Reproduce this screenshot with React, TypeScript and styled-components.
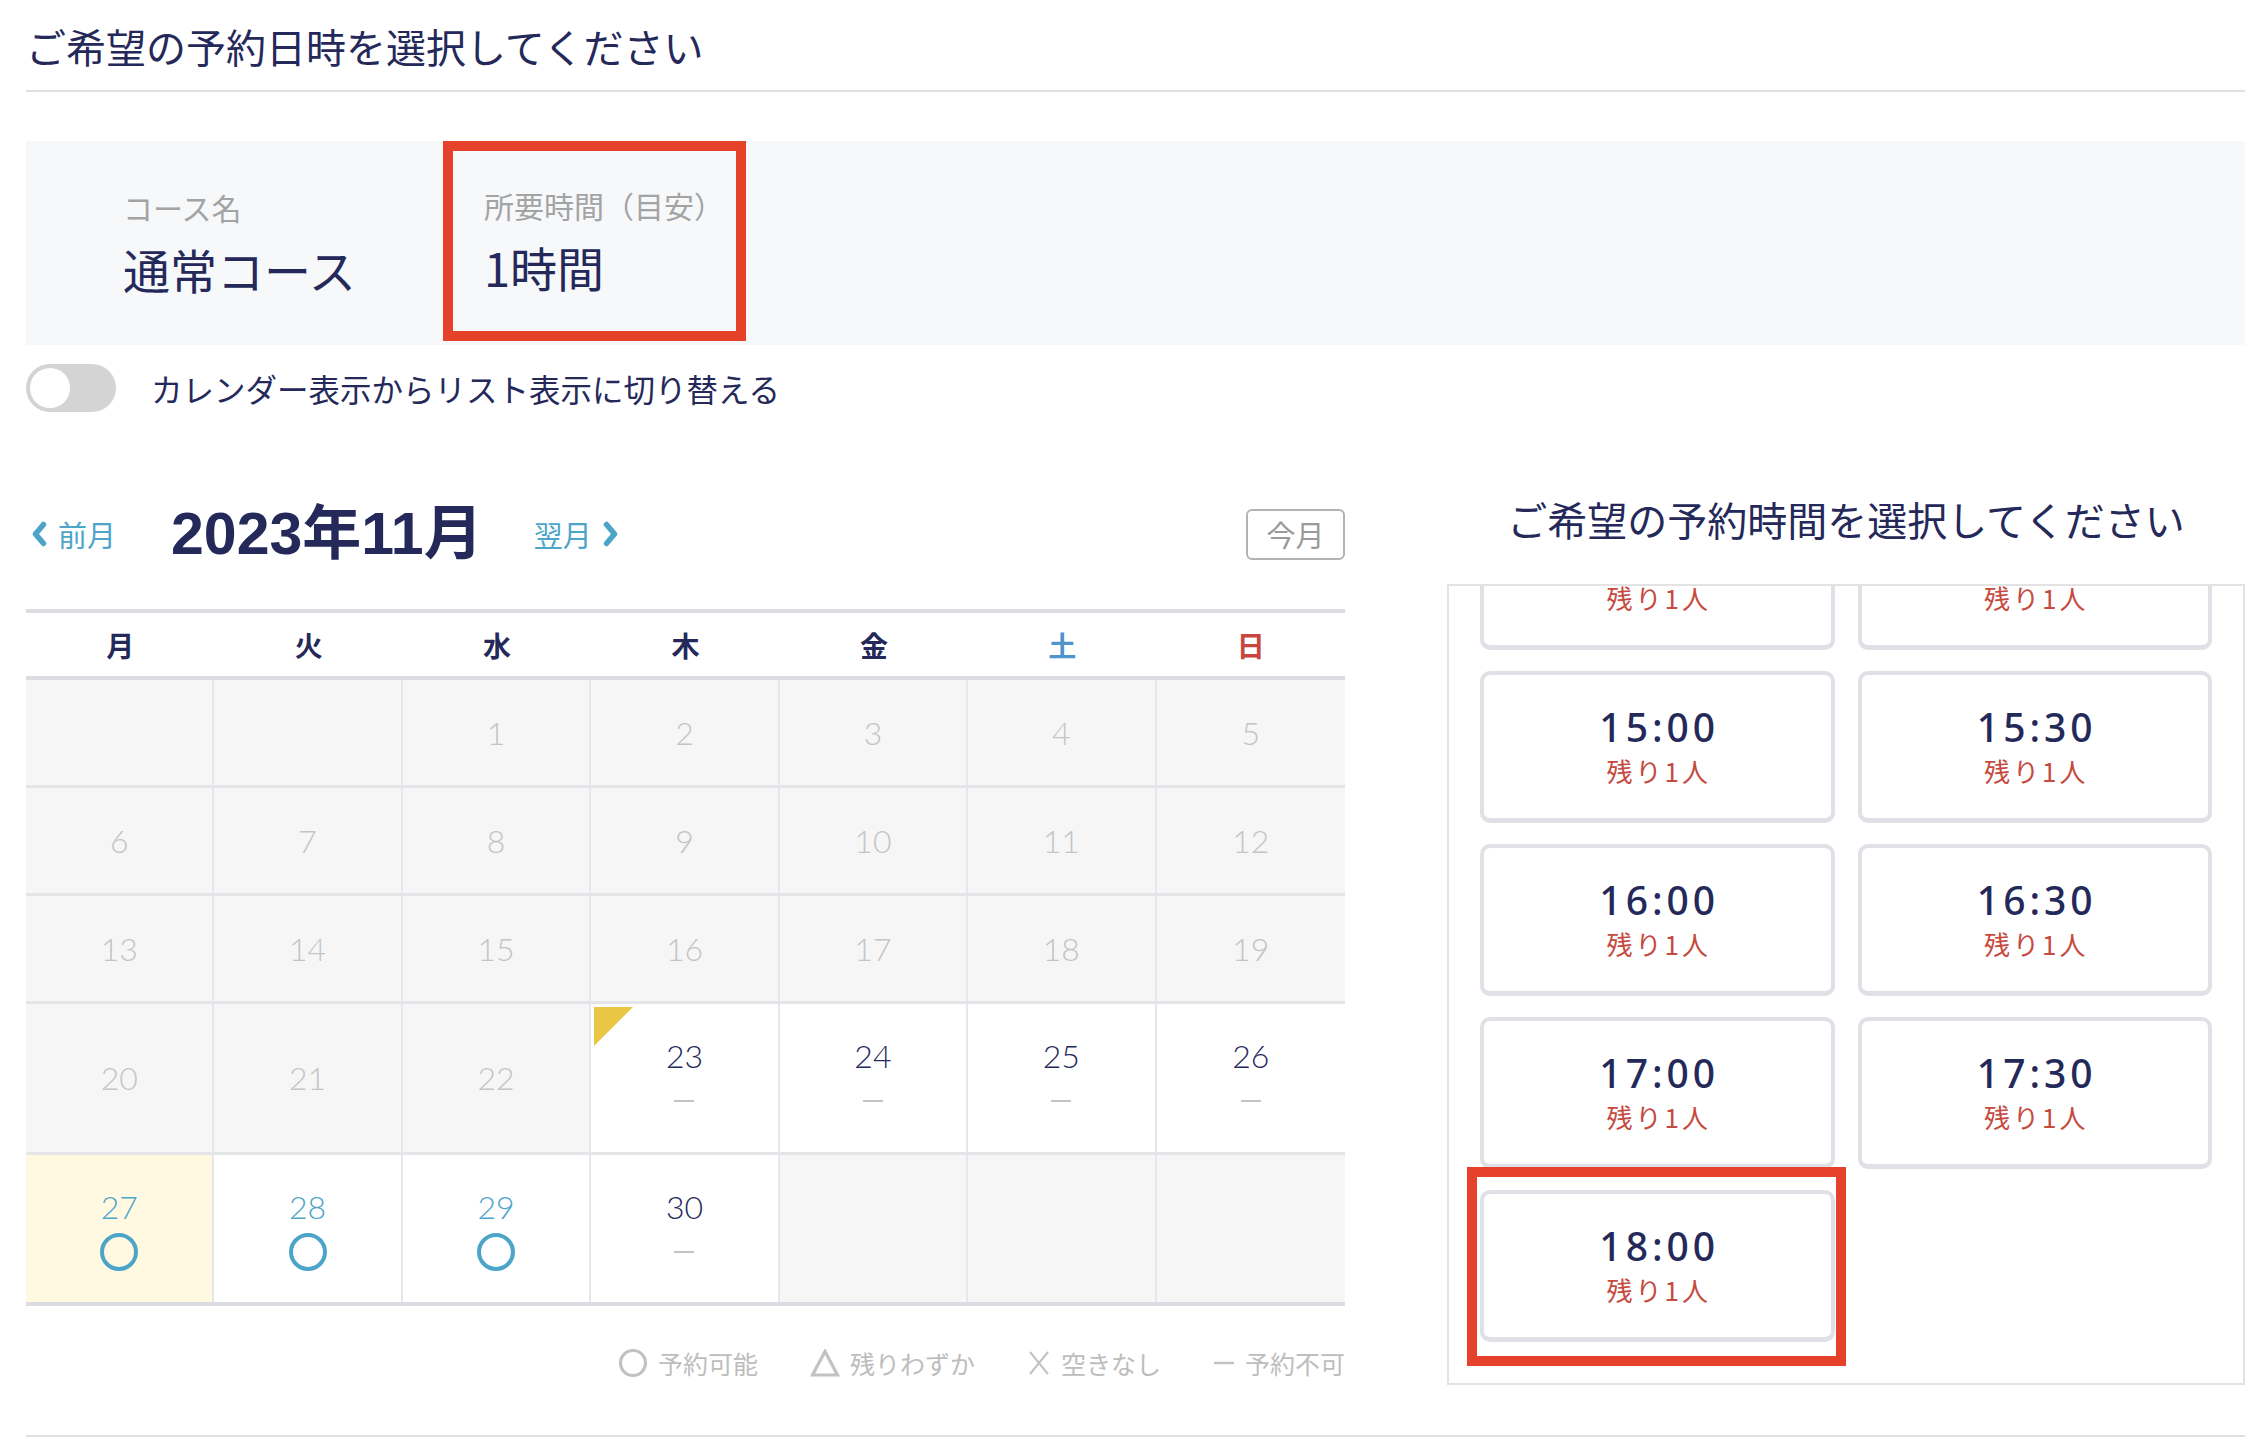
import React, { useLayoutEffect, useRef } from 'react';
import styled, { createGlobalStyle, css } from 'styled-components';

const NAVY = '#24295a';
const BLUE = '#4ca5c9';
const RED = '#c64a40';
const MARK = '#e6412b';

const GlobalStyle = createGlobalStyle`
  html, body {
    margin: 0;
    padding: 0;
    background: #fff;
  }
  body {
    font-family: 'Noto Sans CJK JP', 'Noto Sans', sans-serif;
    color: ${NAVY};
  }
  * {
    box-sizing: border-box;
  }
`;

const Page = styled.div`
  width: 2262px;
  padding: 0 17px 0 26px;
`;

const PageTitle = styled.h1`
  margin: 0;
  padding: 18px 0 16px;
  font-size: 40px;
  line-height: 56px;
  font-weight: 400;
  border-bottom: 2px solid #e0e0e0;
`;

const InfoBox = styled.div`
  margin-top: 49px;
  height: 204px;
  background: #f7f8fa;
  display: flex;
  align-items: flex-start;
  padding-left: 97px;
`;

const InfoItem = styled.div<{ $marked?: boolean }>`
  width: 320px;
  height: 204px;
  display: flex;
  flex-direction: column;
  justify-content: center;
  ${({ $marked }) =>
    $marked &&
    css`
      width: 303px;
      height: 200px;
      border: 10px solid ${MARK};
      padding-left: 31px;
    `}
`;

const InfoLabel = styled.div`
  font-size: 30px;
  line-height: 40px;
  color: #a3a3a3;
`;

const InfoValue = styled.div`
  margin-top: 12px;
  font-size: 47px;
  line-height: 60px;
  font-weight: 400;
`;

const ToggleRow = styled.div`
  margin-top: 19px;
  height: 48px;
  display: flex;
  align-items: center;
  gap: 35px;
`;

const Switch = styled.div`
  width: 90px;
  height: 48px;
  border-radius: 24px;
  background: #d4d4d4;
  display: flex;
  align-items: center;
  padding: 0 4px;
`;

const Knob = styled.div`
  width: 40px;
  height: 40px;
  border-radius: 50%;
  background: #fff;
`;

const ToggleLabel = styled.span`
  font-size: 31.5px;
  line-height: 40px;
`;

const Section = styled.div`
  margin-top: 68px;
  display: flex;
  align-items: flex-start;
  gap: 102px;
`;

const CalendarCol = styled.div`
  width: 1319px;
`;

const CalHeader = styled.div`
  margin-top: 24px;
  height: 60px;
  display: flex;
  align-items: center;
  padding-left: 5px;
`;

const NavLink = styled.span`
  display: flex;
  align-items: center;
  gap: 10px;
  font-size: 29px;
  color: ${BLUE};
`;

const MonthTitle = styled.h2`
  margin: 0 51px 0 55px;
  font-family: 'Liberation Sans', 'Noto Sans CJK JP', sans-serif;
  font-size: 59px;
  font-weight: 700;
  line-height: 60px;
`;

const TodayButton = styled.button`
  margin-left: auto;
  width: 99px;
  height: 51px;
  border: 2px solid #b3b3b3;
  border-radius: 6px;
  background: #fff;
  color: #9a9a9a;
  font-family: inherit;
  font-size: 29px;
  display: flex;
  align-items: center;
  justify-content: center;
  padding: 0;
`;

const Table = styled.div`
  margin-top: 45px;
  border-top: 4px solid #dcdde2;
`;

const HeadRow = styled.div`
  display: grid;
  grid-template-columns: repeat(7, 1fr);
  align-items: center;
  height: 67px;
  border-bottom: 4px solid #dcdde2;
`;

const HeadCell = styled.div<{ $color: string }>`
  text-align: center;
  font-size: 28px;
  font-weight: 700;
  color: ${({ $color }) => $color};
`;

const WeekRow = styled.div<{ $tall?: boolean }>`
  display: grid;
  grid-template-columns: repeat(7, 1fr);
  height: ${({ $tall }) => ($tall ? 151 : 108)}px;
  border-bottom: 3px solid #e4e5e9;
  &:last-child {
    border-bottom: 4px solid #dcdde2;
  }
`;

type CellState = 'off' | 'none' | 'ok';

const DayCell = styled.div<{ $state: CellState; $today?: boolean }>`
  position: relative;
  display: flex;
  flex-direction: column;
  align-items: center;
  justify-content: center;
  border-right: 2px solid #e6e7eb;
  background: ${({ $state, $today }) =>
    $today ? '#fff9e2' : $state === 'off' ? '#f6f6f7' : '#fff'};
  &:last-child {
    border-right: none;
  }
`;

const Corner = styled.span`
  position: absolute;
  top: 3px;
  left: 3px;
  width: 0;
  height: 0;
  border-top: 39px solid #e9c744;
  border-right: 39px solid transparent;
`;

const DayNum = styled.div<{ $state: CellState }>`
  font-family: 'Lato', 'Inter', 'Liberation Sans', sans-serif;
  font-weight: 300;
  font-size: 32px;
  line-height: 40px;
  color: ${({ $state }) =>
    $state === 'off' ? '#c4c4c4' : $state === 'ok' ? BLUE : NAVY};
`;

const MarkBox = styled.div`
  height: 38px;
  margin-top: 6px;
  display: flex;
  align-items: center;
  justify-content: center;
`;

const Dash = styled.span`
  width: 20px;
  height: 2px;
  background: #c3c3c3;
`;

const Ring = styled.span`
  width: 38px;
  height: 38px;
  border: 4px solid ${BLUE};
  border-radius: 50%;
`;

const Legend = styled.div`
  margin-top: 37px;
  display: flex;
  justify-content: flex-end;
  gap: 52px;
  font-size: 25px;
  line-height: 40px;
  color: #bdbdbd;
`;

const LegendItem = styled.span`
  display: flex;
  align-items: center;
  gap: 10px;
`;

const SlotCol = styled.div`
  width: 798px;
`;

const SlotTitle = styled.h2`
  margin: 14px 0 40px;
  text-align: center;
  font-size: 40px;
  line-height: 50px;
  font-weight: 400;
`;

const SlotScroller = styled.div`
  height: 801px;
  border: 2px solid #e3e3e3;
  overflow-y: auto;
  scrollbar-width: none;
  &::-webkit-scrollbar {
    display: none;
  }
`;

const SlotGrid = styled.div`
  display: grid;
  grid-template-columns: 1fr 1fr;
  column-gap: 23px;
  row-gap: 21px;
  padding: 31px 31px 41px;
`;

const SlotCard = styled.div<{ $marked?: boolean }>`
  position: relative;
  height: 152px;
  border: 4px solid #e0e1e6;
  border-bottom-width: 5px;
  border-radius: 10px;
  background: #fff;
  display: flex;
  flex-direction: column;
  align-items: center;
  justify-content: center;
  ${({ $marked }) =>
    $marked &&
    css`
      &::after {
        content: '';
        position: absolute;
        top: -27px;
        bottom: -29px;
        left: -17px;
        right: -15px;
        border: 10px solid ${MARK};
      }
    `}
`;

const SlotTime = styled.div`
  font-family: 'Noto Sans', 'Liberation Sans', sans-serif;
  font-weight: 500;
  font-size: 39px;
  line-height: 44px;
  letter-spacing: 4px;
  padding-left: 4px;
`;

const SlotLeft = styled.div`
  margin-top: 4px;
  font-size: 26px;
  line-height: 36px;
  letter-spacing: 3px;
  padding-left: 3px;
  color: ${RED};
`;

const Footer = styled.div`
  margin-top: 50px;
  border-top: 2px solid #e0e0e0;
  height: 21px;
`;

const Chevron = ({ dir }: { dir: 'left' | 'right' }) => (
  <svg width="17" height="26" viewBox="0 0 17 26">
    <polyline
      points={dir === 'left' ? '12.5,3.5 4.5,13 12.5,22.5' : '4.5,3.5 12.5,13 4.5,22.5'}
      fill="none"
      stroke={BLUE}
      strokeWidth="5.5"
      strokeLinecap="round"
      strokeLinejoin="round"
    />
  </svg>
);

type Day = { n?: number; state: CellState; today?: boolean; corner?: boolean };

const off = (n?: number): Day => ({ n, state: 'off' });

const weeks: { tall?: boolean; days: Day[] }[] = [
  { days: [off(), off(), off(1), off(2), off(3), off(4), off(5)] },
  { days: [6, 7, 8, 9, 10, 11, 12].map(off) },
  { days: [13, 14, 15, 16, 17, 18, 19].map(off) },
  {
    tall: true,
    days: [
      off(20),
      off(21),
      off(22),
      { n: 23, state: 'none', corner: true },
      { n: 24, state: 'none' },
      { n: 25, state: 'none' },
      { n: 26, state: 'none' },
    ],
  },
  {
    tall: true,
    days: [
      { n: 27, state: 'ok', today: true },
      { n: 28, state: 'ok' },
      { n: 29, state: 'ok' },
      { n: 30, state: 'none' },
      off(),
      off(),
      off(),
    ],
  },
];

const weekdays = [
  { label: '月', color: NAVY },
  { label: '火', color: NAVY },
  { label: '水', color: NAVY },
  { label: '木', color: NAVY },
  { label: '金', color: NAVY },
  { label: '土', color: '#4f94cc' },
  { label: '日', color: '#c8463e' },
];

const times: string[] = [];
for (let h = 10; h <= 18; h++) {
  times.push(`${h}:00`);
  if (h < 18) times.push(`${h}:30`);
}

const LegendIcon = ({ kind }: { kind: 'ok' | 'few' | 'full' | 'none' }) => {
  const stroke = '#c2c2c2';
  if (kind === 'ok')
    return (
      <svg width="30" height="30" viewBox="0 0 30 30">
        <circle cx="15" cy="15" r="12.5" fill="none" stroke={stroke} strokeWidth="3.2" />
      </svg>
    );
  if (kind === 'few')
    return (
      <svg width="30" height="28" viewBox="0 0 30 28">
        <polygon points="15,2.5 27.5,26 2.5,26" fill="none" stroke={stroke} strokeWidth="3.2" strokeLinejoin="miter" />
      </svg>
    );
  if (kind === 'full')
    return (
      <svg width="24" height="26" viewBox="0 0 24 26">
        <path d="M3 2 L21 24 M21 2 L3 24" stroke={stroke} strokeWidth="2" fill="none" />
      </svg>
    );
  return (
    <svg width="22" height="26" viewBox="0 0 22 26">
      <path d="M1 13 H21" stroke={stroke} strokeWidth="2.5" />
    </svg>
  );
};

const App = () => {
  const scroller = useRef<HTMLDivElement>(null);

  useLayoutEffect(() => {
    const el = scroller.current;
    if (el) el.scrollTop = el.scrollHeight;
  }, []);

  return (
    <Page>
      <GlobalStyle />
      <PageTitle>ご希望の予約日時を選択してください</PageTitle>

      <InfoBox>
        <InfoItem>
          <InfoLabel>コース名</InfoLabel>
          <InfoValue>通常コース</InfoValue>
        </InfoItem>
        <InfoItem $marked>
          <InfoLabel>所要時間（目安）</InfoLabel>
          <InfoValue>1時間</InfoValue>
        </InfoItem>
      </InfoBox>

      <ToggleRow>
        <Switch>
          <Knob />
        </Switch>
        <ToggleLabel>カレンダー表示からリスト表示に切り替える</ToggleLabel>
      </ToggleRow>

      <Section>
        <CalendarCol>
          <CalHeader>
            <NavLink>
              <Chevron dir="left" />
              前月
            </NavLink>
            <MonthTitle>2023年11月</MonthTitle>
            <NavLink>
              翌月
              <Chevron dir="right" />
            </NavLink>
            <TodayButton>今月</TodayButton>
          </CalHeader>

          <Table>
            <HeadRow>
              {weekdays.map((w) => (
                <HeadCell key={w.label} $color={w.color}>
                  {w.label}
                </HeadCell>
              ))}
            </HeadRow>
            {weeks.map((week, wi) => (
              <WeekRow key={wi} $tall={week.tall}>
                {week.days.map((d, di) => (
                  <DayCell key={di} $state={d.state} $today={d.today}>
                    {d.corner && <Corner />}
                    {d.n !== undefined && <DayNum $state={d.state}>{d.n}</DayNum>}
                    {d.state === 'none' && (
                      <MarkBox>
                        <Dash />
                      </MarkBox>
                    )}
                    {d.state === 'ok' && (
                      <MarkBox>
                        <Ring />
                      </MarkBox>
                    )}
                  </DayCell>
                ))}
              </WeekRow>
            ))}
          </Table>

          <Legend>
            <LegendItem>
              <LegendIcon kind="ok" />
              予約可能
            </LegendItem>
            <LegendItem>
              <LegendIcon kind="few" />
              残りわずか
            </LegendItem>
            <LegendItem>
              <LegendIcon kind="full" />
              空きなし
            </LegendItem>
            <LegendItem>
              <LegendIcon kind="none" />
              予約不可
            </LegendItem>
          </Legend>
        </CalendarCol>

        <SlotCol>
          <SlotTitle>ご希望の予約時間を選択してください</SlotTitle>
          <SlotScroller ref={scroller}>
            <SlotGrid>
              {times.map((t) => (
                <SlotCard key={t} $marked={t === '18:00'}>
                  <SlotTime>{t}</SlotTime>
                  <SlotLeft>残り1人</SlotLeft>
                </SlotCard>
              ))}
            </SlotGrid>
          </SlotScroller>
        </SlotCol>
      </Section>

      <Footer />
    </Page>
  );
};

export default App;
